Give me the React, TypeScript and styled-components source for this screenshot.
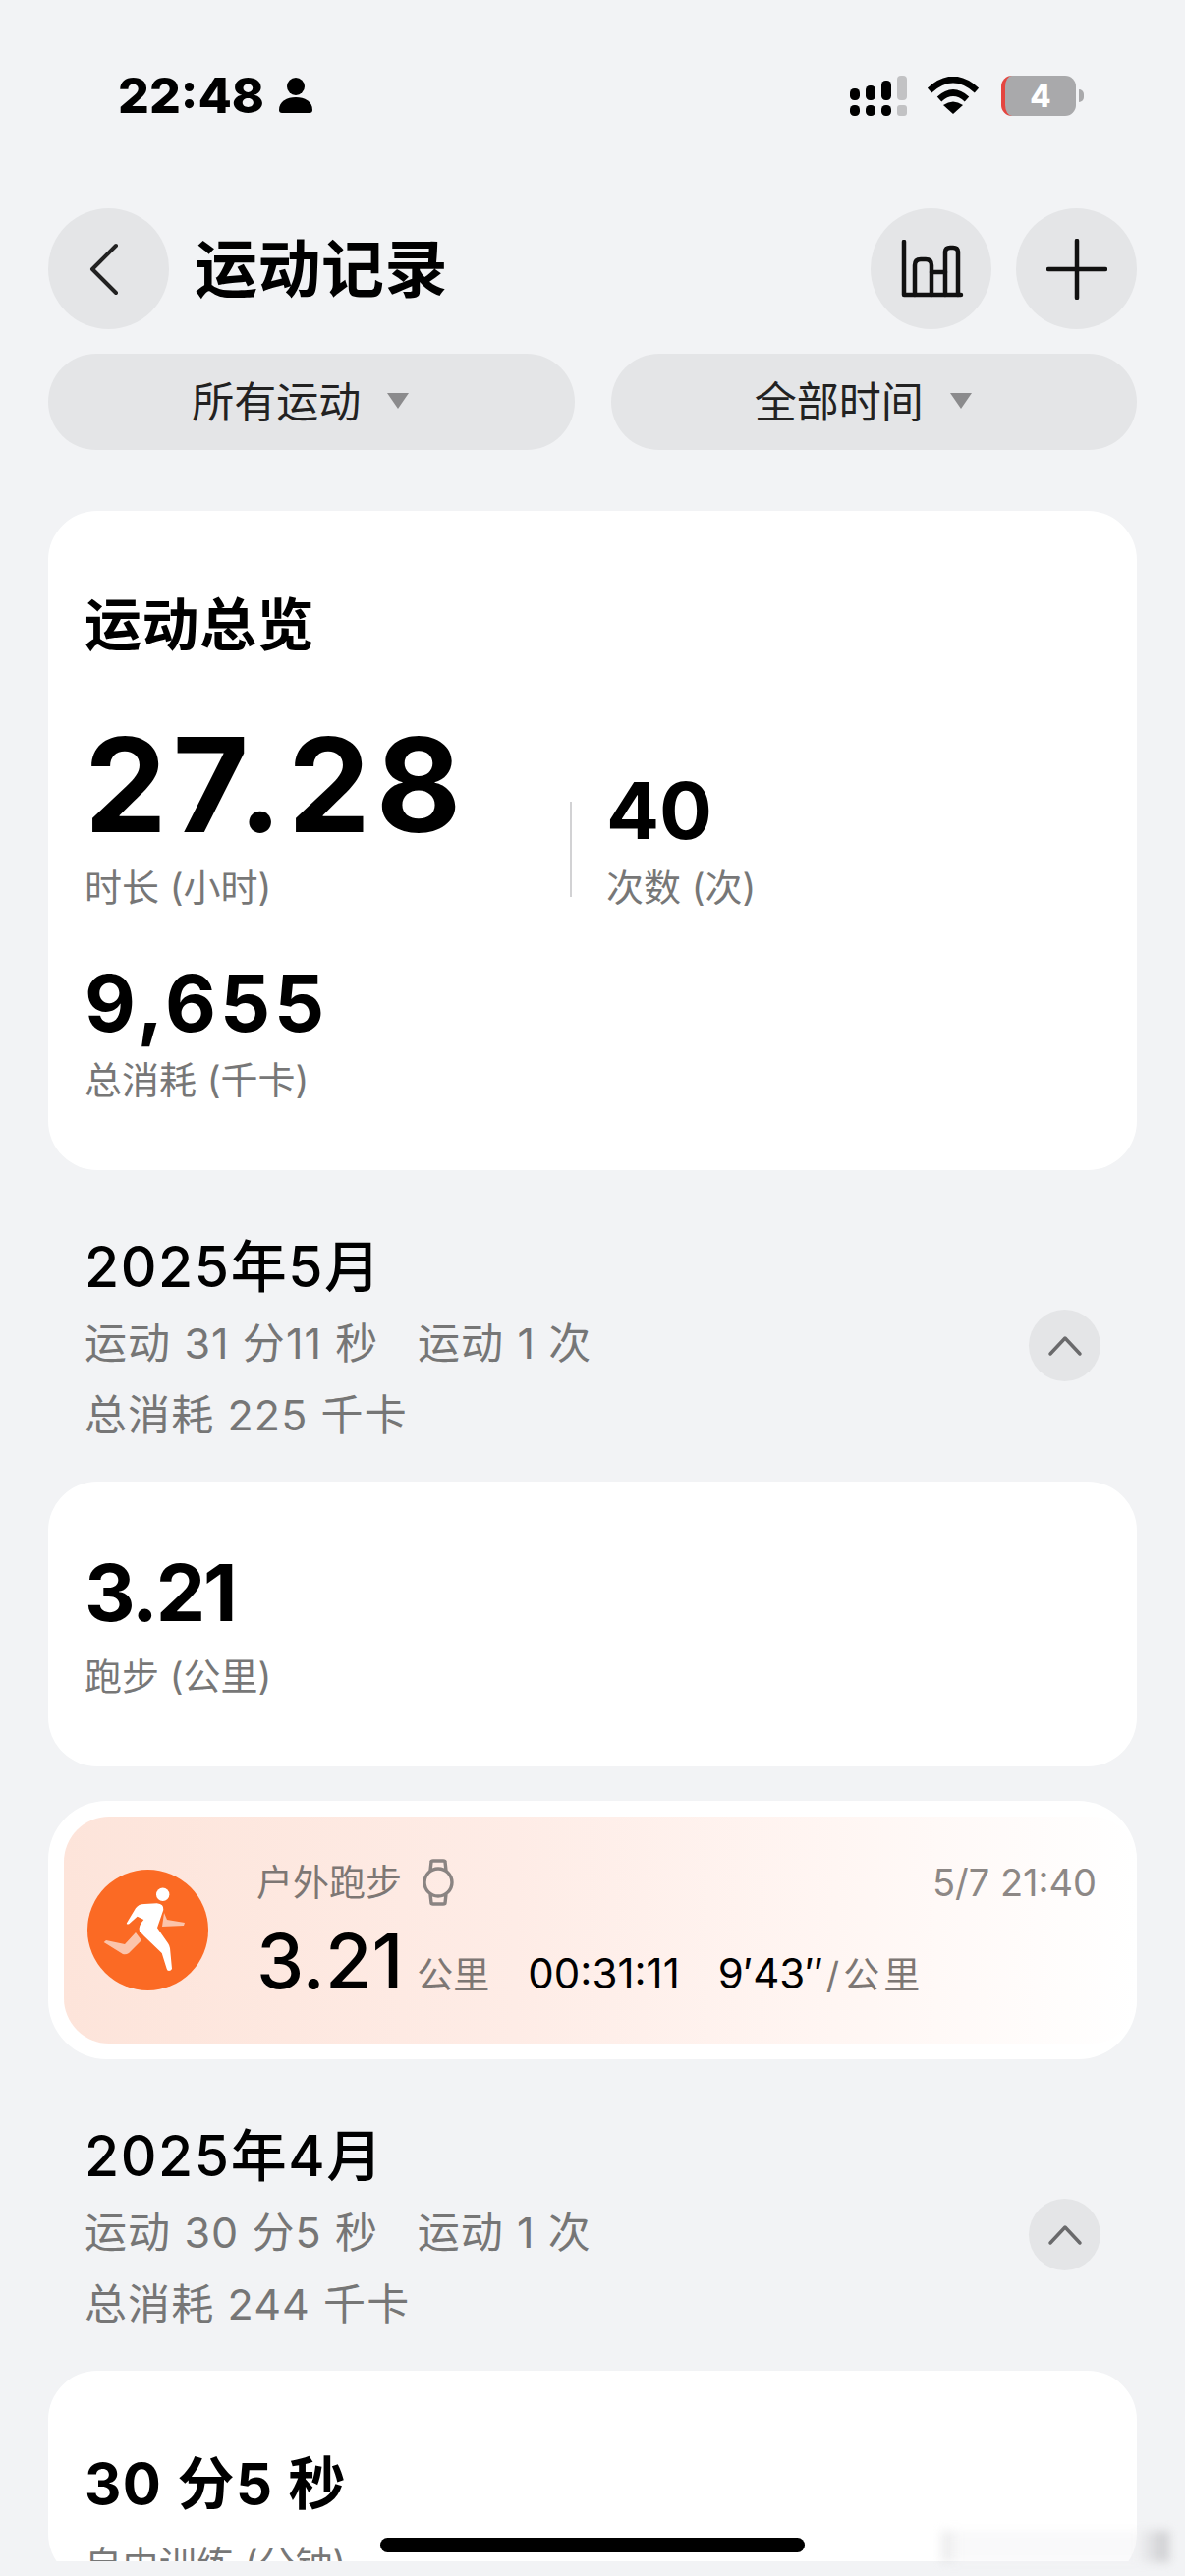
import * as React from 'react';
import styled, { createGlobalStyle } from 'styled-components';

const GlobalStyle = createGlobalStyle`
  html, body {
    margin: 0;
    padding: 0;
    background: #f2f3f5;
    font-family: Inter, "Noto Sans CJK SC", sans-serif;
    color: #000;
  }
  * { box-sizing: border-box; }
`;

const Page = styled.div`
  position: relative;
  width: 1206px;
  height: 2622px;
  background: #f2f3f5;
  overflow: hidden;
`;

const Scroll = styled.div`
  height: 2607px;
  overflow: hidden;
`;

const StatusBar = styled.div`
  height: 212px;
  padding: 72px 111px 0 120px;
  display: flex;
  justify-content: space-between;
  align-items: flex-start;
`;

const Clock = styled.div`
  display: flex;
  align-items: center;
  gap: 15px;
  font-size: 50px;
  line-height: 50px;
  font-weight: 800;
`;

const StatusIcons = styled.div`
  display: flex;
  align-items: center;
  gap: 21px;
  height: 50px;
`;

const Battery = styled.div`
  position: relative;
  width: 76px;
  height: 41px;
  margin-left: 2px;
  border-radius: 11px;
  background: #a9a9ab;
  border-left: 4px solid #e5453f;
  color: #fff;
  font-size: 31px;
  font-weight: 800;
  line-height: 41px;
  text-align: center;

  &::after {
    content: '';
    position: absolute;
    right: -8px;
    top: 14px;
    width: 5px;
    height: 13px;
    border-radius: 0 6px 6px 0;
    background: #a9a9ab;
  }
`;

const Header = styled.div`
  display: flex;
  align-items: center;
  padding: 0 49px;
  height: 123px;
`;

const RoundButton = styled.div<{ $size?: number }>`
  width: ${({ $size }) => $size || 123}px;
  height: ${({ $size }) => $size || 123}px;
  flex: none;
  border-radius: 50%;
  background: #e4e5e7;
  display: flex;
  align-items: center;
  justify-content: center;
`;

const PageTitle = styled.h1`
  flex: 1;
  margin: 0 0 0 26px;
  font-size: 64px;
  line-height: 64px;
  font-weight: 700;
  letter-spacing: 0.5px;
`;

const HeaderActions = styled.div`
  display: flex;
  gap: 25px;
`;

const Filters = styled.div`
  display: flex;
  gap: 37px;
  padding: 0 49px;
  margin-top: 25px;
`;

const FilterPill = styled.div`
  flex: 1;
  height: 98px;
  padding-right: 22px;
  border-radius: 49px;
  background: #e4e5e7;
  display: flex;
  align-items: center;
  justify-content: center;
  gap: 27px;
  font-size: 43px;
  line-height: 43px;
  color: #222;
`;

const Caret = styled.span`
  width: 0;
  height: 0;
  margin-top: -2px;
  border-left: 11px solid transparent;
  border-right: 11px solid transparent;
  border-top: 16px solid #8b8b8d;
`;

const Card = styled.section<{ $pad: string }>`
  margin: 0 49px;
  padding: ${({ $pad }) => $pad};
  border-radius: 50px;
  background: #fff;
`;

const OverviewCard = styled(Card)`
  margin-top: 62px;
`;

const CardTitle = styled.h2`
  margin: 0 0 67px;
  font-size: 58px;
  line-height: 58px;
  font-weight: 700;
  letter-spacing: 0.5px;
`;

const StatRow = styled.div`
  display: flex;
  align-items: flex-end;
`;

const StatBlock = styled.div<{ $width?: number }>`
  ${({ $width }) => ($width ? `width: ${$width}px;` : '')}
`;

const BigNumber = styled.div`
  font-size: 133px;
  line-height: 133px;
  font-weight: 700;
  letter-spacing: 6px;
`;

const Number = styled.div<{ $tracking?: number }>`
  font-size: 80px;
  line-height: 80px;
  font-weight: 700;
  letter-spacing: ${({ $tracking }) => $tracking || 0}px;
`;

const StatLabel = styled.div<{ $gap?: number }>`
  margin-top: ${({ $gap }) => $gap || 19}px;
  font-size: 38px;
  line-height: 38px;
  color: #777;
`;

const Divider = styled.div`
  width: 2px;
  height: 97px;
  margin: 0 35px 9px 0;
  background: #d2d2d4;
`;

const SecondStat = styled(StatBlock)`
  margin-top: 59px;
`;

const Month = styled.div`
  padding: 70px 86px 31px;
`;

const MonthTitle = styled.h3`
  margin: 0 0 13px;
  font-size: 57px;
  line-height: 57px;
  font-weight: 500;
  letter-spacing: 1.6px;
`;

const MonthBody = styled.div`
  display: flex;
  justify-content: space-between;
  align-items: flex-start;
`;

const MonthLine = styled.div`
  font-size: 43px;
  line-height: 73px;
  color: #767676;
  letter-spacing: 1.1px;
  white-space: pre;
`;

const Collapse = styled(RoundButton)`
  margin-top: 2px;
`;

const DurationNumber = styled(Number)`
  font-size: 58px;
  line-height: 58px;
  letter-spacing: 1.4px;
  white-space: pre;
`;

const ActivityCard = styled.div`
  margin: 35px 49px 0;
  padding: 16px 0 16px 16px;
  border-radius: 60px;
  background: #fff;
`;

const ActivityInner = styled.div`
  height: 231px;
  display: flex;
  align-items: center;
  padding: 0 41px 0 24px;
  border-radius: 46px;
  background: linear-gradient(90deg, #fde4da 0%, #feece6 42%, #fff6f3 72%, #ffffff 100%);
`;

const ActivityBadge = styled.div`
  width: 123px;
  height: 123px;
  flex: none;
  border-radius: 50%;
  background: #fb6a24;
`;

const ActivityBody = styled.div`
  flex: 1;
  margin-left: 49px;
`;

const ActivityTop = styled.div`
  display: flex;
  justify-content: space-between;
  align-items: center;
  height: 50px;
  margin-top: -3px;
`;

const ActivityName = styled.div`
  display: flex;
  align-items: center;
  gap: 20px;
  font-size: 37px;
  line-height: 37px;
  color: #7d7774;
`;

const ActivityDate = styled.div`
  font-size: 38px;
  line-height: 38px;
  color: #8d8886;
`;

const ActivityStats = styled.div`
  display: flex;
  align-items: baseline;
  margin-top: 17px;
  font-size: 42px;
  white-space: pre;
`;

const Distance = styled.span`
  font-size: 77px;
  line-height: 77px;
  font-weight: 500;
`;

const Unit = styled.span<{ $gap?: number; $tracking?: number }>`
  margin-left: ${({ $gap }) => $gap || 0}px;
  font-size: 37px;
  letter-spacing: ${({ $tracking }) => $tracking || 0}px;
  color: #7d7774;
`;

const Metric = styled.span`
  margin-left: 39px;
  color: #000;
`;

const HomeIndicator = styled.div`
  position: absolute;
  left: 387px;
  top: 2583px;
  width: 432px;
  height: 15px;
  border-radius: 8px;
  background: #000;
`;

// soft grey smudge that sits over the lower right corner
const Smudge = styled.div`
  position: absolute;
  left: 958px;
  top: 2576px;
  width: 232px;
  height: 32px;
  background: linear-gradient(90deg, rgba(205, 205, 208, 0.35) 0 3%, rgba(240, 240, 242, 0.4) 8% 86%, rgba(195, 195, 198, 0.7) 97% 100%);
  filter: blur(5px);
  pointer-events: none;
`;

const BackIcon = () => (
  <svg width="36" height="54" viewBox="0 0 36 54" fill="none" stroke="#222" strokeWidth="4" strokeLinecap="round" strokeLinejoin="round" style={{ marginRight: 8 }}>
    <path d="M29 3 L5 27 L29 51" />
  </svg>
);

const ChartIcon = () => (
  <svg width="66" height="60" viewBox="0 0 66 60" fill="none" stroke="#111" strokeWidth="4.5" strokeLinecap="round" strokeLinejoin="round">
    <path d="M5 2 V56 H63" />
    <path d="M16 56 V26 Q16 20 22 20 H27 Q33 20 33 26 V56" />
    <path d="M33 33 H47" />
    <path d="M47 56 V13 Q47 8 52 8 H55 Q60 8 60 13 V56" />
  </svg>
);

const PlusIcon = () => (
  <svg width="62" height="62" viewBox="0 0 62 62" fill="none" stroke="#111" strokeWidth="4.5" strokeLinecap="round">
    <path d="M31 2 V60 M2 31 H60" />
  </svg>
);

const ChevronUp = () => (
  <svg width="36" height="24" viewBox="0 0 36 24" fill="none" stroke="#6a6a6c" strokeWidth="3.5" strokeLinecap="round" strokeLinejoin="round">
    <path d="M3 20 L18 4 L33 20" />
  </svg>
);

const PersonIcon = () => (
  <svg width="34" height="36" viewBox="0 0 34 36" fill="#000">
    <circle cx="17" cy="9" r="9" />
    <path d="M0 33 C0 24 8 20 17 20 C26 20 34 24 34 33 Q34 36 31 36 H3 Q0 36 0 33 Z" />
  </svg>
);

const SignalIcon = () => (
  <svg width="58" height="41" viewBox="0 0 58 41">
    <rect x="0" y="13" width="10" height="12" rx="4.5" fill="#000" />
    <rect x="16" y="10" width="10" height="15" rx="4.5" fill="#000" />
    <rect x="32" y="5" width="10" height="20" rx="4.5" fill="#000" />
    <rect x="48" y="0" width="10" height="25" rx="4" fill="#c2c2c4" />
    <rect x="0" y="30" width="10" height="11" rx="4.5" fill="#000" />
    <rect x="16" y="30" width="10" height="11" rx="4.5" fill="#000" />
    <rect x="32" y="30" width="10" height="11" rx="4.5" fill="#000" />
    <rect x="48" y="30" width="10" height="11" rx="3" fill="#c2c2c4" />
  </svg>
);

const WifiIcon = () => (
  <svg width="52" height="38" viewBox="0 0 52 38" fill="none" stroke="#000" strokeWidth="6.5">
    <path d="M2 14 Q26 -8 50 14" />
    <path d="M12 23 Q26 10 40 23" />
    <path d="M16 29 L26 38 L36 29 Q26 22 16 29 Z" fill="#000" stroke="none" />
  </svg>
);

const WatchIcon = () => (
  <svg width="34" height="48" viewBox="0 0 34 48" fill="none" stroke="#8a8482" strokeWidth="3.4" strokeLinejoin="round">
    <circle cx="17" cy="24" r="14" />
    <path d="M9 12 L10 3 Q10 2 12 2 H22 Q24 2 24 3 L25 12" />
    <path d="M9 36 L10 45 Q10 46 12 46 H22 Q24 46 24 45 L25 36" />
  </svg>
);

const RunnerIcon = () => (
  <svg width="123" height="123" viewBox="0 0 123 123">
    <path fill="#fbc4ab" d="M16.7 74 L19 72 L38 76 L49 64 L55 72 L42 85 Q39 87 36 86 Z" />
    <path fill="#fbc4ab" d="M78 44 L81 51 L99 54 L98 57 L76 58 Z" />
    <circle cx="76.7" cy="25.3" r="6.7" fill="#fff" />
    <path
      fill="#fff"
      d="M40 54.3 L49 39.3 Q52 35 58 35 L70.7 34.3 Q78 35 77.3 41 L71 59.3 L82 75 Q83.5 77 84 80 L86 101 Q85 103 83 103 Q81 103 80.7 101 L75.7 85 L58 68 L53 62.7 Q51 58 57.3 51 L50.7 47.7 L42.3 55.3 Q39 56 40 54.3 Z"
    />
  </svg>
);

interface MonthSummaryProps {
  title: string;
  duration: string;
  count: string;
  calories: string;
}

const MonthSummary = ({ title, duration, count, calories }: MonthSummaryProps) => (
  <Month>
    <MonthTitle>{title}</MonthTitle>
    <MonthBody>
      <div>
        <MonthLine>{`${duration}   ${count}`}</MonthLine>
        <MonthLine>{calories}</MonthLine>
      </div>
      <Collapse $size={73}>
        <ChevronUp />
      </Collapse>
    </MonthBody>
  </Month>
);

const App = () => (
  <Page>
    <GlobalStyle />
    <Scroll>
      <StatusBar>
        <Clock>
          22:48
          <PersonIcon />
        </Clock>
        <StatusIcons>
          <SignalIcon />
          <WifiIcon />
          <Battery>4</Battery>
        </StatusIcons>
      </StatusBar>

      <Header>
        <RoundButton>
          <BackIcon />
        </RoundButton>
        <PageTitle>运动记录</PageTitle>
        <HeaderActions>
          <RoundButton>
            <ChartIcon />
          </RoundButton>
          <RoundButton>
            <PlusIcon />
          </RoundButton>
        </HeaderActions>
      </Header>

      <Filters>
        <FilterPill>
          所有运动
          <Caret />
        </FilterPill>
        <FilterPill>
          全部时间
          <Caret />
        </FilterPill>
      </Filters>

      <OverviewCard $pad="87px 37px 73px">
        <CardTitle>运动总览</CardTitle>
        <StatRow>
          <StatBlock $width={494}>
            <BigNumber>27.28</BigNumber>
            <StatLabel>时长 (小时)</StatLabel>
          </StatBlock>
          <Divider />
          <StatBlock>
            <Number>40</Number>
            <StatLabel>次数 (次)</StatLabel>
          </StatBlock>
        </StatRow>
        <SecondStat>
          <Number $tracking={4}>9,655</Number>
          <StatLabel>总消耗 (千卡)</StatLabel>
        </SecondStat>
      </OverviewCard>

      <MonthSummary title="2025年5月" duration="运动 31 分11 秒" count="运动 1 次" calories="总消耗 225 千卡" />

      <Card $pad="73px 37px">
        <Number $tracking={-2}>3.21</Number>
        <StatLabel $gap={26}>跑步 (公里)</StatLabel>
      </Card>

      <ActivityCard>
        <ActivityInner>
          <ActivityBadge>
            <RunnerIcon />
          </ActivityBadge>
          <ActivityBody>
            <ActivityTop>
              <ActivityName>
                户外跑步
                <WatchIcon />
              </ActivityName>
              <ActivityDate>5/7 21:40</ActivityDate>
            </ActivityTop>
            <ActivityStats>
              <Distance>3.21</Distance>
              <Unit $gap={14}>公里</Unit>
              <Metric>00:31:11</Metric>
              <Metric>
                9′43″<Unit $gap={3} $tracking={4}>/公里</Unit>
              </Metric>
            </ActivityStats>
          </ActivityBody>
        </ActivityInner>
      </ActivityCard>

      <MonthSummary title="2025年4月" duration="运动 30 分5 秒" count="运动 1 次" calories="总消耗 244 千卡" />

      <Card $pad="86px 37px 0">
        <DurationNumber>30 分5 秒</DurationNumber>
        <StatLabel $gap={34}>自由训练 (分钟)</StatLabel>
      </Card>
    </Scroll>
    <Smudge />
    <HomeIndicator />
  </Page>
);

export default App;
